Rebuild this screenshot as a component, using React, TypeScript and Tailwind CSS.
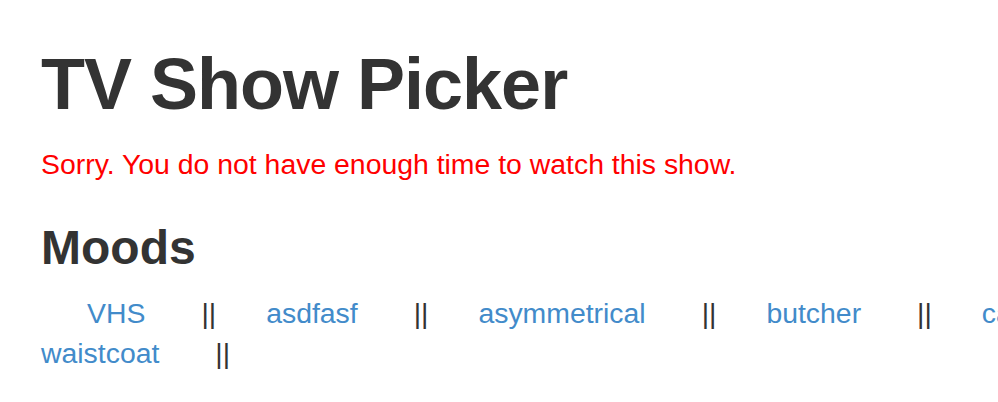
const moods = ['VHS', 'asdfasf', 'asymmetrical', 'butcher', 'cardigan'];

function MoodItem({ name, first }: { name: string; first?: boolean }) {
  return (
    <span className={`flex items-baseline shrink-0 ${first ? 'pl-[46px]' : ''}`}>
      <a href="#" className="text-[#428bca] no-underline">{name}</a>
      <span className="ml-[56px] mr-[50px] text-[#333333]">||</span>
    </span>
  );
}

export default function App() {
  return (
    <div className="w-[998px] h-[402px] overflow-hidden bg-white pl-[41px] font-['Liberation_Sans',Arial,sans-serif] text-[#333333]">
      <h1 className="mt-[45px] mb-[20px] text-[72px] leading-[1.1] font-bold tracking-[-1px]">TV Show Picker</h1>
      <p className="text-[28.4px] leading-[40px] text-[#ff0000] mb-[20px]">
        Sorry. You do not have enough time to watch this show.
      </p>
      <h3 className="mt-[38px] mb-[18px] text-[48px] leading-[1.1] font-bold">Moods</h3>
      <div className="text-[28.4px] leading-[40px]">
        <div className="flex whitespace-nowrap">
          {moods.map((m, i) => (
            <MoodItem key={m} name={m} first={i === 0} />
          ))}
        </div>
        <div className="flex whitespace-nowrap">
          <MoodItem name="waistcoat" />
        </div>
      </div>
    </div>
  );
}
